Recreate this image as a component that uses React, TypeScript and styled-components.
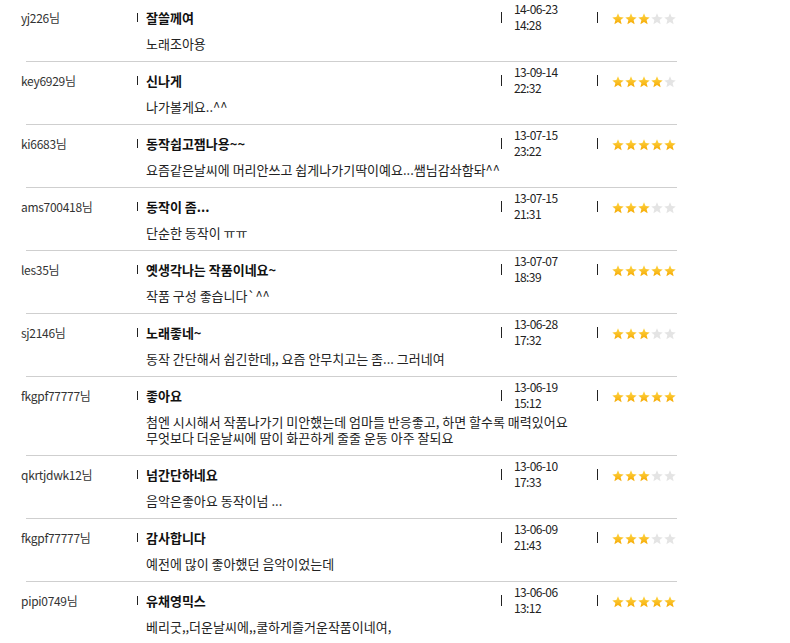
import styled, { createGlobalStyle } from 'styled-components';

const GlobalStyle = createGlobalStyle`
  body {
    margin: 0;
    background: #fff;
    font-family: 'Noto Sans CJK KR', 'Noto Sans', sans-serif;
    font-size: 12px;
    color: #222;
  }
`;

const REVIEWS = [
  { user: 'yj226님', title: '잘쓸께여', date: '14-06-23', time: '14:28', rate: 3, text: ['노래조아용'] },
  { user: 'key6929님', title: '신나게', date: '13-09-14', time: '22:32', rate: 4, text: ['나가볼게요..^^'] },
  { user: 'ki6683님', title: '동작쉽고잼나용~~', date: '13-07-15', time: '23:22', rate: 5, text: ['요즘같은날씨에 머리안쓰고 쉽게나가기딱이예요...쌤님감솨함돠^^'] },
  { user: 'ams700418님', title: '동작이 좀...', date: '13-07-15', time: '21:31', rate: 3, text: ['단순한 동작이 ㅠㅠ'] },
  { user: 'les35님', title: '옛생각나는 작품이네요~', date: '13-07-07', time: '18:39', rate: 5, text: ['작품 구성 좋습니다`^^'] },
  { user: 'sj2146님', title: '노래좋네~', date: '13-06-28', time: '17:32', rate: 3, text: ['동작 간단해서 쉽긴한데,, 요즘 안무치고는 좀... 그러네여'] },
  {
    user: 'fkgpf77777님',
    title: '좋아요',
    date: '13-06-19',
    time: '15:12',
    rate: 5,
    text: [
      '첨엔 시시해서 작품나가기 미안했는데 엄마들 반응좋고, 하면 할수록 매력있어요',
      '무엇보다 더운날씨에 땀이 화끈하게 줄줄 운동 아주 잘되요',
    ],
  },
  { user: 'qkrtjdwk12님', title: '넘간단하네요', date: '13-06-10', time: '17:33', rate: 3, text: ['음악은좋아요 동작이넘 ...'] },
  { user: 'fkgpf77777님', title: '감사합니다', date: '13-06-09', time: '21:43', rate: 3, text: ['예전에 많이 좋아했던 음악이었는데'] },
  { user: 'pipi0749님', title: '유채영믹스', date: '13-06-06', time: '13:12', rate: 5, text: ['베리굿,,더운날씨에,,쿨하게즐거운작품이네여,'] },
];

const Star = ({ on }: { on: boolean }) => (
  <svg width="12" height="12" viewBox="0 0 12 12">
    <defs>
      <linearGradient id="starFill" x1="0" y1="0" x2="0" y2="1">
        <stop offset="0" stopColor="#ffd84a" />
        <stop offset="1" stopColor="#f5a800" />
      </linearGradient>
    </defs>
    <polygon
      points="6,0.3 7.6,4.1 11.7,4.4 8.6,7.1 9.6,11.3 6,9 2.4,11.3 3.4,7.1 0.3,4.4 4.4,4.1"
      fill={on ? 'url(#starFill)' : '#e4e4e4'}
    />
  </svg>
);

const ReviewList = () => (
  <List>
    {REVIEWS.map((r, i) => (
      <Review key={i}>
        <Head>
          <User>{r.user}</User>
          <TitleCell>
            <Pipe />
            <Title>{r.title}</Title>
          </TitleCell>
          <DateCell>
            <Pipe $tall />
            <DateText>
              {r.date}
              <br />
              {r.time}
            </DateText>
          </DateCell>
          <RateCell>
            <Pipe $tall />
            <Stars>
              {[0, 1, 2, 3, 4].map((n) => (
                <Star key={n} on={n < r.rate} />
              ))}
            </Stars>
          </RateCell>
        </Head>
        <Comment>
          {r.text.map((t, j) => (
            <div key={j}>{t}</div>
          ))}
        </Comment>
      </Review>
    ))}
  </List>
);

const App = () => (
  <>
    <GlobalStyle />
    <ReviewList />
  </>
);

const List = styled.ul`
  list-style: none;
  margin: -1px 0 0;
  padding: 0 0 0 21px;
`;

// separator starts 6px right of the user name, as in the original board
const Review = styled.li`
  width: 656px;
  padding-bottom: 9px;
  border-bottom: 1px solid #cfcfcf;
  border-image: linear-gradient(to right, transparent 6px, #cfcfcf 6px) 1;
`;

const Head = styled.div`
  display: flex;
  align-items: center;
  height: 37px;
`;

const User = styled.div`
  width: 116px;
  color: #333;
  letter-spacing: -0.3px;
`;

const TitleCell = styled.div`
  display: flex;
  align-items: center;
  width: 364px;
  gap: 8px;
`;

const Pipe = styled.span<{ $tall?: boolean }>`
  display: inline-block;
  width: 1px;
  height: ${(p) => (p.$tall ? '11px' : '9px')};
  background: #222;
`;

const Title = styled.strong`
  font-size: 13px;
  font-weight: bold;
  color: #111;
`;

const DateCell = styled.div`
  display: flex;
  align-items: center;
  width: 96px;
  gap: 12px;
`;

const DateText = styled.div`
  line-height: 16px;
  color: #222;
  letter-spacing: -0.6px;
  margin-top: -1px;
`;

const RateCell = styled.div`
  display: flex;
  align-items: center;
  gap: 14px;
`;

const Stars = styled.div`
  display: flex;
  gap: 1px;
  margin-top: 3px;
`;

const Comment = styled.div`
  padding-left: 125px;
  font-size: 13px;
  line-height: 16px;
  color: #222;
`;

export default App;
